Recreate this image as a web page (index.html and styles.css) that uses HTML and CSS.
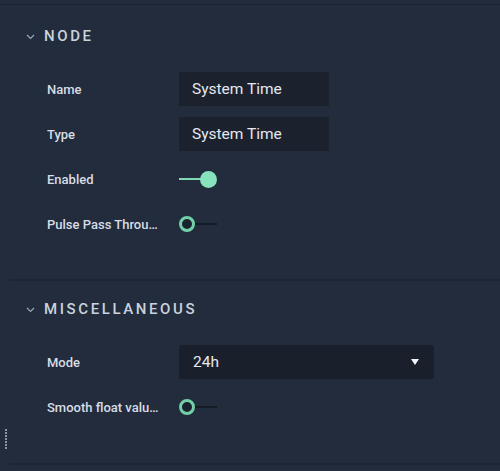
FILE: index.html
```html
<!DOCTYPE html>
<html>
<head>
<meta charset="utf-8">
<link rel="stylesheet" href="styles.css">
</head>
<body>
<div class="panel">
  <div class="topline"></div>
  <section class="section">
    <div class="header">
      <svg class="chev" width="9" height="6" viewBox="0 0 9 6"><path d="M1 1 L4.5 4.5 L8 1" fill="none" stroke="#9aa6b4" stroke-width="1.2"/></svg>
      <span class="title">NODE</span>
    </div>
    <div class="rows">
      <div class="row">
        <span class="label">Name</span>
        <div class="field">System Time</div>
      </div>
      <div class="row">
        <span class="label">Type</span>
        <div class="field">System Time</div>
      </div>
      <div class="row">
        <span class="label">Enabled</span>
        <div class="toggle on"><span class="track"></span><span class="knob"></span></div>
      </div>
      <div class="row">
        <span class="label">Pulse Pass Through</span>
        <div class="toggle off"><span class="knob"></span><span class="track"></span></div>
      </div>
    </div>
  </section>
  <section class="section misc">
    <div class="header">
      <svg class="chev" width="9" height="6" viewBox="0 0 9 6"><path d="M1 1 L4.5 4.5 L8 1" fill="none" stroke="#9aa6b4" stroke-width="1.2"/></svg>
      <span class="title">MISCELLANEOUS</span>
    </div>
    <div class="rows">
      <div class="row">
        <span class="label">Mode</span>
        <div class="select"><span>24h</span><span class="tri"></span></div>
      </div>
      <div class="row">
        <span class="label">Smooth float values</span>
        <div class="toggle off"><span class="knob"></span><span class="track"></span></div>
      </div>
    </div>
    <div class="grip"></div>
  </section>
</div>
</body>
</html>
```
FILE: styles.css
```css
* { box-sizing: border-box; }
html, body { margin: 0; padding: 0; }
body {
  background: #222c3c;
  font-family: Roboto, "Noto Sans", sans-serif;
  width: 500px;
  height: 471px;
  overflow: hidden;
}
.panel { position: relative; }
.topline {
  height: 1px;
  margin-top: 4px;
  background: #1a2130;
}
.section {
  margin-left: 9px;
  border-bottom: 2px solid #1d2533;
  position: relative;
}
.section:first-of-type { height: 276px; }
.section.misc { height: 184px; }
.header {
  display: flex;
  align-items: center;
  height: 62px;
  padding-left: 17px;
}
.misc .header { height: 56px; }
.chev { margin-right: 9px; margin-top: 1px; }
.title {
  color: #c9d3de;
  font-size: 15px;
  font-weight: 500;
  letter-spacing: 2.6px;
}
.rows {
  display: flex;
  flex-direction: column;
  gap: 11px;
  margin-top: 5px;
}
.misc .rows { margin-top: 8px; }
.row {
  display: flex;
  align-items: center;
  height: 34px;
}
.label {
  flex: none;
  width: 114px;
  margin-left: 38px;
  margin-right: 18px;
  color: #d6dde6;
  font-size: 13px;
  font-weight: 500;
  white-space: nowrap;
  overflow: hidden;
  text-overflow: ellipsis;
  padding-top: 1px;
}
.field {
  width: 150px;
  height: 34px;
  background: #1b222e;
  color: #e4e9ef;
  font-size: 15.5px;
  display: flex;
  align-items: center;
  padding-left: 13px;
}
.select {
  width: 255px;
  height: 34px;
  background: #1a202b;
  border-radius: 2px;
  color: #e4e9ef;
  font-size: 15.5px;
  display: flex;
  align-items: center;
  justify-content: space-between;
  padding: 0 15px 0 14px;
}
.tri {
  width: 0; height: 0;
  border-left: 4.5px solid transparent;
  border-right: 4.5px solid transparent;
  border-top: 6px solid #f2f4f7;
}
.toggle {
  display: flex;
  align-items: center;
  width: 40px;
}
.toggle .track {
  height: 2px;
  width: 22px;
}
.toggle.on .track { background: #7fd9b3; }
.toggle.on .knob {
  width: 17px; height: 17px;
  border-radius: 50%;
  background: #86e3bd;
  margin-left: -1px;
}
.toggle.off .knob {
  width: 16px; height: 16px;
  border-radius: 50%;
  border: 3px solid #72d0a8;
  background: #1b222e;
}
.toggle.off .track {
  background: #151b24;
  width: 22px;
}
.grip {
  position: absolute;
  left: -4px;
  top: 148px;
  width: 2px;
  height: 20px;
  background: repeating-linear-gradient(to bottom, #8a96a6 0 2px, transparent 2px 3px);
}
```
